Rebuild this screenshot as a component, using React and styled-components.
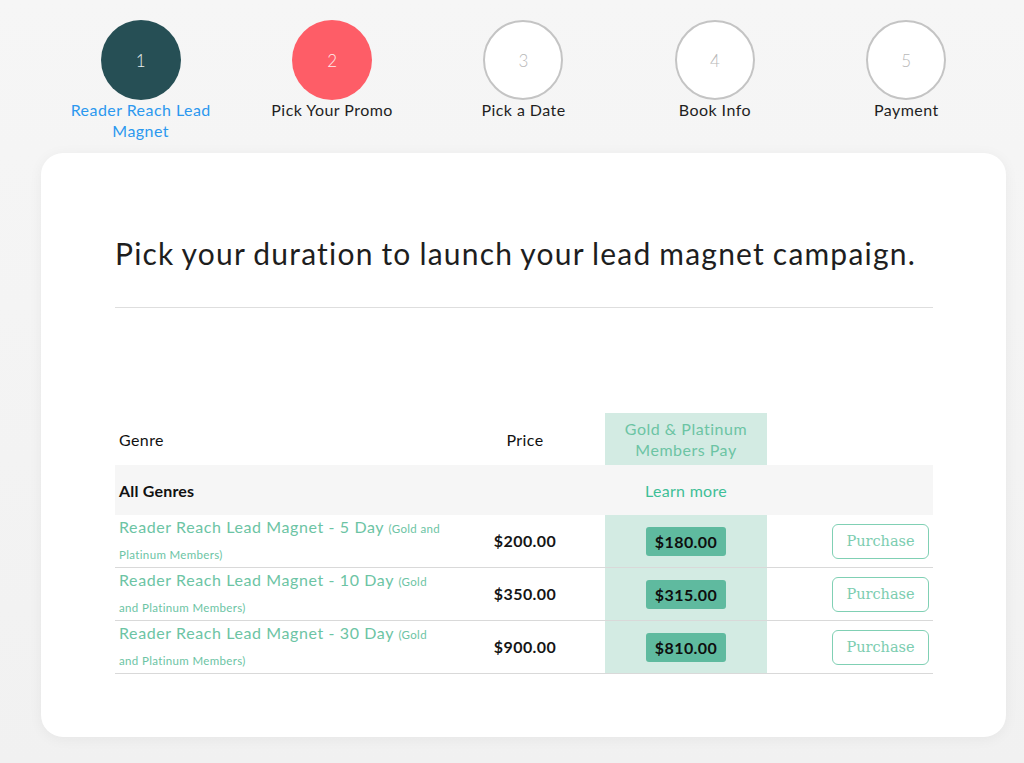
import React from "react";
import styled, { createGlobalStyle } from "styled-components";

const GlobalStyle = createGlobalStyle`
  html, body {
    margin: 0;
    padding: 0;
    background: linear-gradient(180deg, #f6f6f6 0%, #f1f1f1 100%);
    font-family: "Lato", "Liberation Sans", sans-serif;
    color: #1d1d1d;
  }
`;

const Page = styled.div`
  width: 1024px;
  height: 763px;
  box-sizing: border-box;
  padding: 20px 18px 0 41px;
  overflow: hidden;
`;

const Steps = styled.div`
  width: 965px;
  display: grid;
  grid-template-columns: repeat(5, 1fr);
  padding: 0 4px;
  box-sizing: border-box;
  height: 133px;
`;

const Step = styled.div`
  display: flex;
  flex-direction: column;
  align-items: center;
`;

const Circle = styled.div`
  width: 80px;
  height: 80px;
  border-radius: 50%;
  box-sizing: border-box;
  display: flex;
  align-items: center;
  justify-content: center;
  font-size: 17px;
  font-weight: 300;
  background: ${({ $bg }) => $bg};
  color: ${({ $fg }) => $fg};
  border: ${({ $border }) => ($border ? "2px solid #c4c4c4" : "none")};
`;

const StepLabel = styled.div`
  margin-top: -1px;
  font-size: 16px;
  line-height: 21px;
  text-align: center;
  width: 166px;
  color: ${({ $active }) => ($active ? "#2b98ef" : "#1f1f1f")};
  letter-spacing: 0.45px;
`;

const Card = styled.div`
  width: 965px;
  height: 584px;
  background: #ffffff;
  border-radius: 22px;
  box-shadow: 0 2px 14px rgba(0, 0, 0, 0.05);
  padding: 78px 73px 0 74px;
  box-sizing: border-box;
`;

const Heading = styled.h1`
  margin: 0;
  font-size: 30px;
  font-weight: 400;
  line-height: 44px;
  color: #1e1e1e;
  letter-spacing: 1.2px;
  word-spacing: -1px;
  padding-bottom: 32px;
  border-bottom: 1px solid #dedede;
`;

const Table = styled.table`
  width: 100%;
  margin-top: 105px;
  border-collapse: collapse;
  table-layout: fixed;
`;

const Col = styled.col`
  width: ${({ $w }) => $w}px;
`;

const HeadCell = styled.th`
  height: 52px;
  padding: 0 4px;
  font-size: 16px;
  font-weight: 400;
  text-align: ${({ $align }) => $align || "left"};
  color: #111;
  letter-spacing: 0.4px;
`;

const GoldHead = styled(HeadCell)`
  background: #d3ebe3;
  color: #6cc4a4;
  text-align: center;
  line-height: 21px;
  letter-spacing: 0.5px;
`;

const GenreRow = styled.tr`
  background: #f6f6f6;
`;

const GenreCell = styled.td`
  height: 50px;
  padding: 0 4px;
  font-size: 16px;
  font-weight: 700;
  color: #111;
  letter-spacing: 0.2px;
`;

const LearnMore = styled.td`
  text-align: center;
  color: #3fbf97;
  font-size: 16px;
  letter-spacing: 0.3px;
`;

const Row = styled.tr`
  border-bottom: 1px solid #d9d9d9;
`;

const Cell = styled.td`
  height: 52px;
  padding: 0 4px;
  vertical-align: middle;
  line-height: 24px;
  text-align: ${({ $align }) => $align || "left"};
`;

const GoldCell = styled(Cell)`
  background: #d3ebe3;
  text-align: center;
`;

const Title = styled.span`
  color: #6cc4a4;
  font-size: 16px;
  letter-spacing: 0.6px;
`;

const Small = styled.span`
  font-size: 11.5px;
  letter-spacing: 0.35px;
`;

const Price = styled.span`
  font-size: 16px;
  font-weight: 700;
  color: #151515;
  letter-spacing: 0.4px;
`;

const Badge = styled.span`
  display: inline-block;
  width: 80px;
  height: 29px;
  line-height: 29px;
  border-radius: 3px;
  background: #5fba9f;
  color: #0e0e0e;
  font-size: 16px;
  font-weight: 700;
  letter-spacing: 0.4px;
`;

const Purchase = styled.button`
  width: 97px;
  height: 35px;
  background: #fff;
  border: 1px solid #80d0b4;
  border-radius: 6px;
  color: #7ccdb0;
  font-family: "DejaVu Serif", "Liberation Serif", serif;
  font-size: 14.5px;
  cursor: pointer;
  padding: 0;
`;

const steps = [
  { n: 1, label: "Reader Reach Lead Magnet", bg: "#264f55", fg: "#e8eeee", active: true },
  { n: 2, label: "Pick Your Promo", bg: "#fe5d67", fg: "#ffecec" },
  { n: 3, label: "Pick a Date", bg: "#fff", fg: "#b8b8b8", border: true },
  { n: 4, label: "Book Info", bg: "#fff", fg: "#b8b8b8", border: true },
  { n: 5, label: "Payment", bg: "#fff", fg: "#b8b8b8", border: true },
];

const rows = [
  { days: 5, price: "$200.00", member: "$180.00", note: "(Gold and Platinum Members)" },
  { days: 10, price: "$350.00", member: "$315.00", note: "(Gold and Platinum Members)" },
  { days: 30, price: "$900.00", member: "$810.00", note: "(Gold and Platinum Members)" },
];

export default function App() {
  return (
    <Page>
      <GlobalStyle />
      <Steps>
        {steps.map((s) => (
          <Step key={s.n}>
            <Circle $bg={s.bg} $fg={s.fg} $border={s.border}>
              {s.n}
            </Circle>
            <StepLabel $active={s.active}>{s.label}</StepLabel>
          </Step>
        ))}
      </Steps>
      <Card>
        <Heading>Pick your duration to launch your lead magnet campaign.</Heading>
        <Table>
          <colgroup>
            <Col $w={330} />
            <Col $w={160} />
            <Col $w={162} />
            <Col $w={166} />
          </colgroup>
          <thead>
            <tr>
              <HeadCell>Genre</HeadCell>
              <HeadCell $align="center">Price</HeadCell>
              <GoldHead>
                Gold &amp; Platinum
                <br />
                Members Pay
              </GoldHead>
              <HeadCell />
            </tr>
          </thead>
          <tbody>
            <GenreRow>
              <GenreCell>All Genres</GenreCell>
              <td />
              <LearnMore>Learn more</LearnMore>
              <td />
            </GenreRow>
            {rows.map((r) => (
              <Row key={r.days}>
                <Cell>
                  <Title>
                    Reader Reach Lead Magnet - {r.days} Day <Small>{r.note}</Small>
                  </Title>
                </Cell>
                <Cell $align="center">
                  <Price>{r.price}</Price>
                </Cell>
                <GoldCell>
                  <Badge>{r.member}</Badge>
                </GoldCell>
                <Cell $align="right">
                  <Purchase>Purchase</Purchase>
                </Cell>
              </Row>
            ))}
          </tbody>
        </Table>
      </Card>
    </Page>
  );
}
